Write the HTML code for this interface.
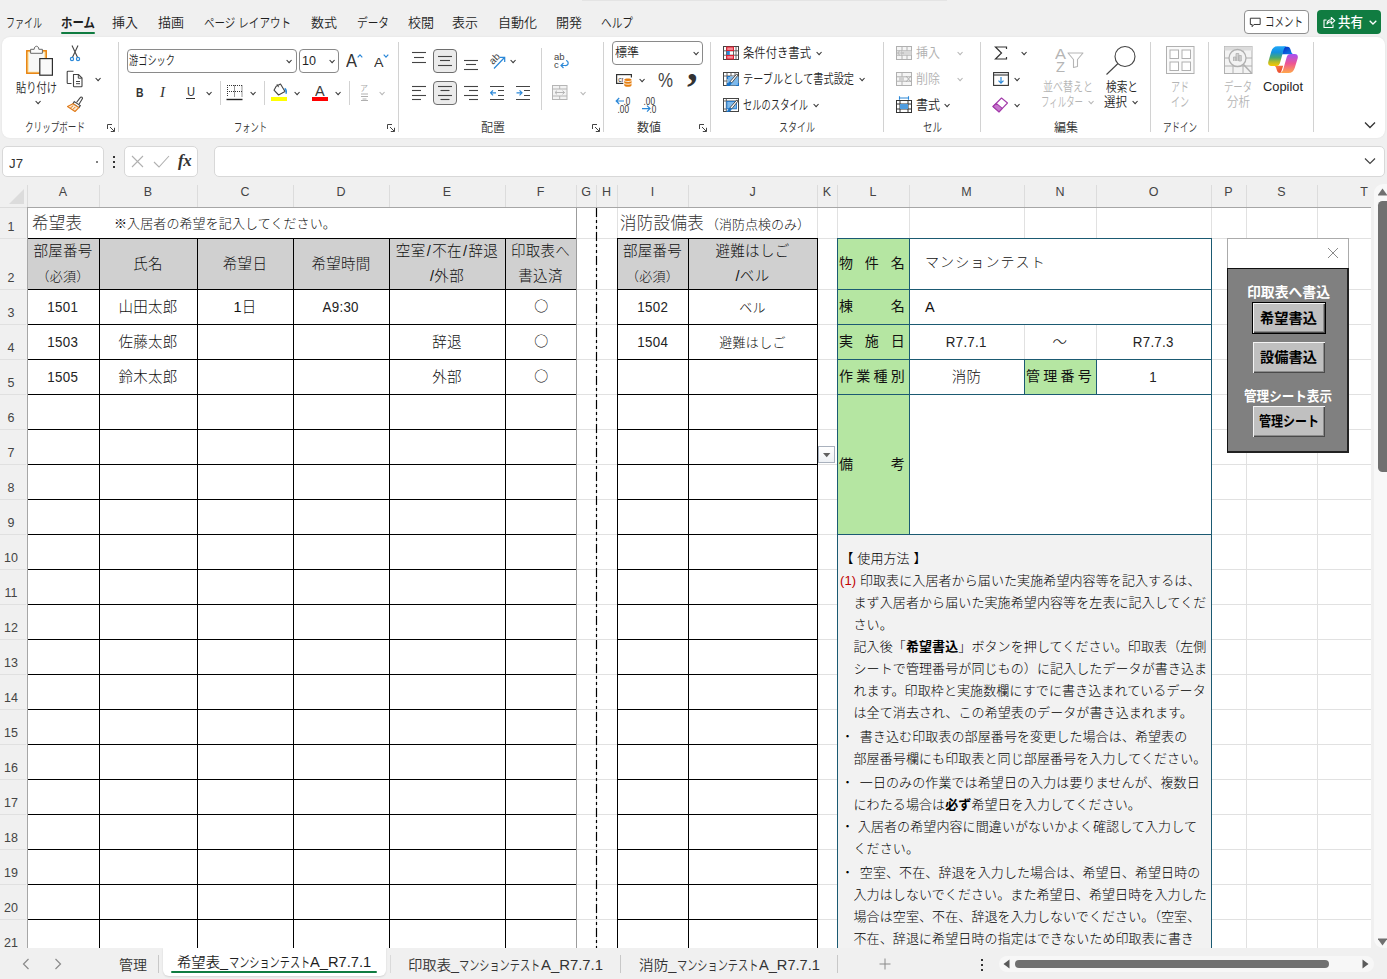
<!DOCTYPE html><html lang="ja"><head><meta charset="utf-8"><title>Excel</title><style>
*{box-sizing:border-box;margin:0;padding:0}
html,body{width:1387px;height:979px;overflow:hidden;background:#f0f0f0}
body{font-family:"Liberation Sans","Noto Sans CJK JP",sans-serif;color:#222;position:relative}
.abs{position:absolute}
.ui{font-family:"Liberation Sans","Noto Sans CJK JP",sans-serif;font-size:13px;color:#262626;white-space:nowrap;position:absolute;transform-origin:0 50%;line-height:16px}
.cell{position:absolute;font-family:"Liberation Sans","Noto Sans CJK JP",sans-serif;font-weight:300;color:#111;white-space:nowrap;display:flex;align-items:center;justify-content:center;text-align:center;font-size:14.5px;line-height:27px;letter-spacing:.3px;padding-top:1px}
.cell i{font-style:normal;padding:0 1.2px}
.num{display:inline-block;transform:scaleX(.92);color:#222}
.hl{position:absolute;background:#000;height:1px}
.vl{position:absolute;background:#000;width:1px}
.gh{position:absolute;background:#e1e1e1;height:1px}
.gv{position:absolute;background:#e1e1e1;width:1px}
.colh{position:absolute;top:181px;height:23px;font-size:12.5px;color:#444;text-align:center;line-height:23px;font-family:"Liberation Sans",sans-serif}
.rowh{position:absolute;left:0;width:27px;font-size:12.5px;color:#444;text-align:center;font-family:"Liberation Sans",sans-serif;line-height:16px;padding-right:5px}
</style><style>
.ins{font-family:"Liberation Sans","Noto Sans CJK JP",sans-serif;font-weight:300;font-size:13px;line-height:22px;color:#000;white-space:nowrap;letter-spacing:.1px}
.ins b{font-weight:700}
.fl{font-family:"Liberation Sans","Noto Sans CJK JP",sans-serif;font-weight:700;font-size:13px;line-height:18px;color:#fff;text-align:center;white-space:nowrap;letter-spacing:-.5px}
.fb{font-family:"Liberation Sans","Noto Sans CJK JP",sans-serif;font-weight:700;font-size:13px;color:#000;text-align:center;white-space:nowrap;background:#c0c0c0;display:flex;align-items:center;justify-content:center;letter-spacing:-.5px;padding-bottom:3px}
</style></head><body>
<span class="ui" style="left:6px;top:14.0px;font-size:13px;line-height:18px;color:#1f1f1f;font-weight:350;transform:scaleX(0.6921);">ファイル</span>
<span class="ui" style="left:61px;top:14.0px;font-size:13px;line-height:18px;color:#1f1f1f;font-weight:700;transform:scaleX(0.8803);">ホーム</span>
<span class="ui" style="left:112px;top:14.0px;font-size:13px;line-height:18px;color:#1f1f1f;font-weight:350;transform:scaleX(0.9994);">挿入</span>
<span class="ui" style="left:158px;top:14.0px;font-size:13px;line-height:18px;color:#1f1f1f;font-weight:350;transform:scaleX(0.9994);">描画</span>
<span class="ui" style="left:204px;top:14.0px;font-size:13px;line-height:18px;color:#1f1f1f;font-weight:350;transform:scaleX(0.8104);">ページ レイアウト</span>
<span class="ui" style="left:311px;top:14.0px;font-size:13px;line-height:18px;color:#1f1f1f;font-weight:350;transform:scaleX(0.9994);">数式</span>
<span class="ui" style="left:357px;top:14.0px;font-size:13px;line-height:18px;color:#1f1f1f;font-weight:350;transform:scaleX(0.8202);">データ</span>
<span class="ui" style="left:408px;top:14.0px;font-size:13px;line-height:18px;color:#1f1f1f;font-weight:350;transform:scaleX(0.9994);">校閲</span>
<span class="ui" style="left:452px;top:14.0px;font-size:13px;line-height:18px;color:#1f1f1f;font-weight:350;transform:scaleX(0.9994);">表示</span>
<span class="ui" style="left:498px;top:14.0px;font-size:13px;line-height:18px;color:#1f1f1f;font-weight:350;transform:scaleX(0.9996);">自動化</span>
<span class="ui" style="left:556px;top:14.0px;font-size:13px;line-height:18px;color:#1f1f1f;font-weight:350;transform:scaleX(0.9994);">開発</span>
<span class="ui" style="left:601px;top:14.0px;font-size:13px;line-height:18px;color:#1f1f1f;font-weight:350;transform:scaleX(0.8202);">ヘルプ</span>
<div class="abs" style="left:61px;top:32px;width:34px;height:2px;background:#107c41;border-radius:1px"></div>
<div class="abs" style="left:1244px;top:10px;width:65px;height:24px;background:#fff;border:1px solid #8f8f8f;border-radius:4px"></div>
<svg class="abs" style="left:1249px;top:16px" width="12.5" height="12.5" viewBox="0 0 14 14"><path d="M1.5 2.5 H12.5 V9.5 H5.5 L3.5 12 V9.5 H1.5 Z" fill="none" stroke="#333" stroke-width="1.1" stroke-linejoin="round"/></svg>
<span class="ui" style="left:1265px;top:13.0px;font-size:13px;line-height:18px;color:#1f1f1f;font-weight:350;transform:scaleX(0.7305);">コメント</span>
<div class="abs" style="left:1317px;top:10px;width:64px;height:24px;background:#107c41;border-radius:4px"></div>
<svg class="abs" style="left:1322px;top:15px" width="14" height="14" viewBox="0 0 14 14"><path d="M4.5 5 H2 V12.5 H11 V9.5 M5 9 C5 6 7 4.8 9.3 4.8 V2.5 L12.8 5.7 L9.3 8.8 V6.6 C7.5 6.6 6 7.2 5 9 Z" fill="none" stroke="#fff" stroke-width="1.1" stroke-linejoin="round"/></svg>
<span class="ui" style="left:1338px;top:12.5px;font-size:13.5px;line-height:19px;color:#fff;font-weight:500;transform:scaleX(0.9259);">共有</span>
<svg class="abs" style="left:1369px;top:20px" width="8" height="5" viewBox="0 0 8 5"><path d="M.7 .7 L4 4 L7.3 .7" fill="none" stroke="#fff" stroke-width="1.3"/></svg>
<div class="abs" style="left:582px;top:0;width:365px;height:1px;background:#e4e4e4"></div>
<div class="abs" style="left:2px;top:37px;width:1383px;height:101px;background:#fff;border-radius:8px;box-shadow:0 0 2px rgba(0,0,0,.08)"></div>
<div class="abs" style="left:118px;top:42px;width:1px;height:90px;background:#d2d2d2"></div>
<div class="abs" style="left:398px;top:42px;width:1px;height:90px;background:#d2d2d2"></div>
<div class="abs" style="left:603px;top:42px;width:1px;height:90px;background:#d2d2d2"></div>
<div class="abs" style="left:710px;top:42px;width:1px;height:90px;background:#d2d2d2"></div>
<div class="abs" style="left:883px;top:42px;width:1px;height:90px;background:#d2d2d2"></div>
<div class="abs" style="left:980px;top:42px;width:1px;height:90px;background:#d2d2d2"></div>
<div class="abs" style="left:1150px;top:42px;width:1px;height:90px;background:#d2d2d2"></div>
<div class="abs" style="left:1208px;top:42px;width:1px;height:90px;background:#d2d2d2"></div>
<div class="abs" style="left:1313px;top:42px;width:1px;height:90px;background:#d2d2d2"></div>
<svg class="abs" style="left:25px;top:44px" width="30" height="34" viewBox="0 0 30 34"><rect x="1.8" y="6.8" width="19.4" height="22.4" fill="#fbe7b4" stroke="#e8820c" stroke-width="1.5"/>
<rect x="4" y="9" width="15" height="18.5" fill="#f7f7f7"/>
<path d="M5.6 9.300 V5.300 H9.200 C9.200 1.200 13.800 1.200 13.800 5.300 H17.400 V9.300 Z" fill="#fafafa" stroke="#6a6a6a" stroke-width="1"/>
<rect x="14.8" y="14.600" width="12.600" height="16.600" fill="#fafafa" stroke="#2e2e2e" stroke-width="1.2"/></svg>
<span class="ui" style="left:16px;top:79.0px;font-size:13px;line-height:18px;color:#262626;font-weight:350;transform:scaleX(0.7882);">貼り付け</span>
<svg class="abs" style="left:34.9px;top:99.8px" width="6.2" height="5" viewBox="0 0 7 5"><path d="M.7 .8 L3.5 3.8 L6.3 .8" fill="none" stroke="#333" stroke-width="1.2"/></svg>
<svg class="abs" style="left:67px;top:44px" width="16" height="18" viewBox="0 0 16 18"><path d="M5 1.500 L10.600 13.400 M11 1.500 L5.400 13.400" stroke="#444" stroke-width="1.1" fill="none"/><circle cx="5" cy="15" r="1.600" fill="none" stroke="#2b88d8" stroke-width="1.2"/><circle cx="11" cy="15" r="1.600" fill="none" stroke="#2b88d8" stroke-width="1.2"/></svg>
<svg class="abs" style="left:66px;top:70px" width="18" height="18" viewBox="0 0 18 18"><path d="M5.5 13.5 H2 a.8 .8 0 0 1 -.8 -.8 V2 a.8 .8 0 0 1 .8 -.8 H7.5" fill="none" stroke="#444" stroke-width="1.1"/><path d="M7.5 4.5 H12.5 L16 8 V16 a.7 .7 0 0 1 -.7 .7 H8.2 a.7 .7 0 0 1 -.7 -.7 Z" fill="#fff" stroke="#444" stroke-width="1.1"/><path d="M12.3 4.7 V8.2 H15.8 M10 11.5 H14 M10 13.7 H14" fill="none" stroke="#444" stroke-width="1"/></svg>
<svg class="abs" style="left:94.9px;top:76.8px" width="6.2" height="5" viewBox="0 0 7 5"><path d="M.7 .8 L3.5 3.8 L6.3 .8" fill="none" stroke="#333" stroke-width="1.2"/></svg>
<svg class="abs" style="left:66px;top:96px" width="18" height="17" viewBox="0 0 18 17"><path d="M10.5 6.5 L14.2 1.6 a1.2 1.2 0 0 1 2 1.4 L13 8.2" fill="#fff" stroke="#444" stroke-width="1.1"/><path d="M8.3 5.6 L14.3 9.6 L13 11.6 L7 7.6 Z" fill="#fff" stroke="#444" stroke-width="1.1"/><path d="M7 7.8 L1.5 10.5 L9 15.5 L12.8 11.6 Z" fill="#fce9d2" stroke="#e07b1a" stroke-width="1.1" stroke-linejoin="round"/><path d="M4.2 12.3 L7.2 9.6 M6.5 13.8 L9.3 11" stroke="#e07b1a" stroke-width="1" fill="none"/></svg>
<span class="ui" style="left:25px;top:119.0px;font-size:12.5px;line-height:18px;color:#333;font-weight:350;transform:scaleX(0.6856);">クリップボード</span>
<svg class="abs" style="left:107px;top:124px" width="8" height="8" viewBox="0 0 8 8"><path d="M.5 5 V.5 H5 M3 3 L7.3 7.3 M7.5 3.8 V7.5 H3.8" fill="none" stroke="#444" stroke-width="1"/></svg>
<div class="abs" style="left:127px;top:49px;width:170px;height:24px;background:#fff;border:1px solid #8a8a8a;border-radius:4px"></div>
<span class="ui" style="left:129px;top:52.0px;font-size:12.5px;line-height:18px;color:#1f1f1f;font-weight:350;transform:scaleX(0.7358);">游ゴシック</span>
<svg class="abs" style="left:285.9px;top:58.8px" width="6.2" height="5" viewBox="0 0 7 5"><path d="M.7 .8 L3.5 3.8 L6.3 .8" fill="none" stroke="#333" stroke-width="1.2"/></svg>
<div class="abs" style="left:299px;top:49px;width:40px;height:24px;background:#fff;border:1px solid #8a8a8a;border-radius:4px"></div>
<span class="ui" style="left:302px;top:52.0px;font-size:13px;line-height:18px;color:#1f1f1f;font-weight:350;transform:scaleX(0.9676);">10</span>
<svg class="abs" style="left:328.9px;top:58.8px" width="6.2" height="5" viewBox="0 0 7 5"><path d="M.7 .8 L3.5 3.8 L6.3 .8" fill="none" stroke="#333" stroke-width="1.2"/></svg>
<span class="ui" style="left:346px;top:48.5px;font-size:18px;line-height:25px;color:#333;font-weight:350;transform:scaleX(0.9155);">A</span>
<svg class="abs" style="left:356.5px;top:53.5px" width="6" height="4" viewBox="0 0 6 4"><path d="M.7 3.300 L3 .900 L5.300 3.300" fill="none" stroke="#2b88d8" stroke-width="1.2"/></svg>
<span class="ui" style="left:374px;top:53.0px;font-size:13.5px;line-height:19px;color:#333;font-weight:350;transform:scaleX(1.0537);">A</span>
<svg class="abs" style="left:382.5px;top:54px" width="6" height="4" viewBox="0 0 6 4"><path d="M.7 .700 L3 3.100 L5.300 .700" fill="none" stroke="#2b88d8" stroke-width="1.2"/></svg>
<span class="ui" style="left:135.5px;top:82.5px;font-size:13.5px;line-height:19px;color:#333;font-weight:700;transform:scaleX(0.7692);">B</span>
<span class="ui" style="left:160px;top:83px;font-size:15px;font-style:italic;font-family:'Liberation Serif',serif;color:#333;line-height:18px">I</span>
<span class="ui" style="left:186.5px;top:82.5px;font-size:13px;line-height:18px;color:#333;font-weight:350;transform:scaleX(0.8519);">U</span>
<div class="abs" style="left:186px;top:98px;width:9px;height:1px;background:#333"></div>
<svg class="abs" style="left:205.9px;top:90.8px" width="6.2" height="5" viewBox="0 0 7 5"><path d="M.7 .8 L3.5 3.8 L6.3 .8" fill="none" stroke="#333" stroke-width="1.2"/></svg>
<div class="abs" style="left:220px;top:81px;width:1px;height:24px;background:#d2d2d2"></div>
<svg class="abs" style="left:226px;top:84px" width="17" height="17" viewBox="0 0 17 17"><path d="M1 1.5 H16 M1.5 1 V13 M16 1.5 V13 M8.5 1.5 V13 M1 7.5 H16" stroke="#333" stroke-width="1" stroke-dasharray="1 1" fill="none"/><path d="M.5 15.5 H16.5" stroke="#222" stroke-width="1.4"/></svg>
<svg class="abs" style="left:249.9px;top:90.8px" width="6.2" height="5" viewBox="0 0 7 5"><path d="M.7 .8 L3.5 3.8 L6.3 .8" fill="none" stroke="#333" stroke-width="1.2"/></svg>
<div class="abs" style="left:264px;top:81px;width:1px;height:24px;background:#d2d2d2"></div>
<svg class="abs" style="left:270px;top:83px" width="18" height="15" viewBox="0 0 18 15"><path d="M6.2 3.2 L10.5 1 L15 8.5 L8.6 12 L4 7.2 Z" fill="#fff" stroke="#444" stroke-width="1.1" stroke-linejoin="round"/><path d="M7 1.2 L8.6 4.2" stroke="#444" stroke-width="1" fill="none"/><path d="M14.6 5.5 C16.2 6.5 16.6 8.5 16 10.8" stroke="#2b88d8" stroke-width="1.5" fill="none"/></svg>
<div class="abs" style="left:271px;top:97px;width:16px;height:4px;background:#ffff00"></div>
<svg class="abs" style="left:293.9px;top:90.8px" width="6.2" height="5" viewBox="0 0 7 5"><path d="M.7 .8 L3.5 3.8 L6.3 .8" fill="none" stroke="#333" stroke-width="1.2"/></svg>
<span class="ui" style="left:315.3px;top:79.5px;font-size:15px;line-height:21px;color:#3a3a3a;font-weight:350;transform:scaleX(0.9685);">A</span>
<div class="abs" style="left:312px;top:97px;width:16px;height:4px;background:#ff0000"></div>
<svg class="abs" style="left:334.9px;top:90.8px" width="6.2" height="5" viewBox="0 0 7 5"><path d="M.7 .8 L3.5 3.8 L6.3 .8" fill="none" stroke="#333" stroke-width="1.2"/></svg>
<div class="abs" style="left:349px;top:81px;width:1px;height:24px;background:#d2d2d2"></div>
<span class="ui" style="left:360px;top:82.5px;font-size:8px;line-height:11px;color:#a8a8a8;font-weight:350;transform:scaleX(1.0000);">ア</span>
<svg class="abs" style="left:360px;top:93px" width="9" height="8" viewBox="0 0 9 8"><path d="M1 1 H8 M1 3.5 H8 M2.5 6 H6.5 M1 7.5 H8" stroke="#b0b0b0" stroke-width="1" fill="none"/></svg>
<svg class="abs" style="left:378.9px;top:90.8px" width="6.2" height="5" viewBox="0 0 7 5"><path d="M.7 .8 L3.5 3.8 L6.3 .8" fill="none" stroke="#b5b5b5" stroke-width="1.2"/></svg>
<span class="ui" style="left:234px;top:119.0px;font-size:12.5px;line-height:18px;color:#333;font-weight:350;transform:scaleX(0.6598);">フォント</span>
<svg class="abs" style="left:387px;top:124px" width="8" height="8" viewBox="0 0 8 8"><path d="M.5 5 V.5 H5 M3 3 L7.3 7.3 M7.5 3.8 V7.5 H3.8" fill="none" stroke="#444" stroke-width="1"/></svg>
<svg class="abs" style="left:412px;top:50px" width="14" height="16" viewBox="0 0 14 16"><path d="M0.0 2.5 H14.0" stroke="#444" stroke-width="1.1"/><path d="M2.0 7.5 H12.0" stroke="#444" stroke-width="1.1"/><path d="M0.0 12.5 H14.0" stroke="#444" stroke-width="1.1"/></svg>
<div class="abs" style="left:433px;top:49px;width:24px;height:24px;background:#ebebeb;border:1px solid #6e6e6e;border-radius:4px"></div>
<svg class="abs" style="left:438px;top:53px" width="14" height="16" viewBox="0 0 14 16"><path d="M0.0 3.5 H14.0" stroke="#444" stroke-width="1.1"/><path d="M2.0 7.5 H12.0" stroke="#444" stroke-width="1.1"/><path d="M0.0 12.5 H14.0" stroke="#444" stroke-width="1.1"/></svg>
<svg class="abs" style="left:464px;top:57px" width="14" height="16" viewBox="0 0 14 16"><path d="M0.0 3.5 H14.0" stroke="#444" stroke-width="1.1"/><path d="M2.0 7.5 H12.0" stroke="#444" stroke-width="1.1"/><path d="M0.0 12.5 H14.0" stroke="#444" stroke-width="1.1"/></svg>
<svg class="abs" style="left:488px;top:50px" width="20" height="20" viewBox="0 0 20 20"><text x="2" y="12" font-size="10" font-family="Liberation Sans, sans-serif" fill="#444" transform="rotate(-45 7 10)">ab</text><path d="M6 18.5 L16.5 7.5 M12 7.3 H16.7 V12" stroke="#2b88d8" stroke-width="1.2" fill="none"/></svg>
<svg class="abs" style="left:509.9px;top:58.8px" width="6.2" height="5" viewBox="0 0 7 5"><path d="M.7 .8 L3.5 3.8 L6.3 .8" fill="none" stroke="#333" stroke-width="1.2"/></svg>
<div class="abs" style="left:541px;top:48px;width:1px;height:62px;background:#d2d2d2"></div>
<svg class="abs" style="left:553px;top:52px" width="17" height="18" viewBox="0 0 17 18"><text x="1" y="8" font-size="9.5" font-family="Liberation Sans, sans-serif" fill="#444">ab</text><text x="1" y="16" font-size="9.5" font-family="Liberation Sans, sans-serif" fill="#444">c</text><path d="M13 8.5 C16 9 16 14 12 13.5 H8 M10.5 11 L8 13.5 L10.5 16" stroke="#2b88d8" stroke-width="1.2" fill="none"/></svg>
<svg class="abs" style="left:412px;top:84px" width="14" height="18" viewBox="0 0 14 18"><path d="M0 2.5 H14" stroke="#444" stroke-width="1.1"/><path d="M0 6.5 H9" stroke="#444" stroke-width="1.1"/><path d="M0 11.5 H14" stroke="#444" stroke-width="1.1"/><path d="M0 15.5 H9" stroke="#444" stroke-width="1.1"/></svg>
<div class="abs" style="left:433px;top:81px;width:24px;height:24px;background:#ebebeb;border:1px solid #6e6e6e;border-radius:4px"></div>
<svg class="abs" style="left:438px;top:84px" width="14" height="18" viewBox="0 0 14 18"><path d="M0.0 2.5 H14.0" stroke="#444" stroke-width="1.1"/><path d="M2.5 6.5 H11.5" stroke="#444" stroke-width="1.1"/><path d="M0.0 11.5 H14.0" stroke="#444" stroke-width="1.1"/><path d="M2.5 15.5 H11.5" stroke="#444" stroke-width="1.1"/></svg>
<svg class="abs" style="left:464px;top:84px" width="14" height="18" viewBox="0 0 14 18"><path d="M0 2.5 H14" stroke="#444" stroke-width="1.1"/><path d="M5 6.5 H14" stroke="#444" stroke-width="1.1"/><path d="M0 11.5 H14" stroke="#444" stroke-width="1.1"/><path d="M5 15.5 H14" stroke="#444" stroke-width="1.1"/></svg>
<svg class="abs" style="left:490px;top:84px" width="15" height="18" viewBox="0 0 15 18"><path d="M0 2.5 H14 M8 6.5 H14 M8 11.5 H14 M0 15.5 H14" stroke="#444" stroke-width="1.1"/><path d="M6 8.8 H.8 M3 6.3 L.6 8.8 L3 11.3" stroke="#2b88d8" stroke-width="1.2" fill="none"/></svg>
<svg class="abs" style="left:516px;top:84px" width="15" height="18" viewBox="0 0 15 18"><path d="M0 2.5 H14 M8 6.5 H14 M8 11.5 H14 M0 15.5 H14" stroke="#444" stroke-width="1.1"/><path d="M.5 8.8 H5.8 M3.5 6.3 L6 8.8 L3.5 11.3" stroke="#2b88d8" stroke-width="1.2" fill="none"/></svg>
<svg class="abs" style="left:552px;top:85px" width="16" height="15" viewBox="0 0 16 15"><rect x=".5" y=".5" width="14.5" height="14" fill="#f3f3f3" stroke="#b5b5b5"/><path d="M.5 4 H15 M.5 11 H15 M7.7 .5 V4 M7.7 11 V14.5" stroke="#b5b5b5" fill="none"/><path d="M3 7.5 H12.5 M5 5.7 L3 7.5 L5 9.3 M10.5 5.7 L12.5 7.5 L10.5 9.3" stroke="#b5b5b5" fill="none"/></svg>
<svg class="abs" style="left:579.9px;top:90.8px" width="6.2" height="5" viewBox="0 0 7 5"><path d="M.7 .8 L3.5 3.8 L6.3 .8" fill="none" stroke="#b5b5b5" stroke-width="1.2"/></svg>
<span class="ui" style="left:481px;top:119.0px;font-size:12.5px;line-height:18px;color:#333;font-weight:350;transform:scaleX(0.9594);">配置</span>
<svg class="abs" style="left:592px;top:124px" width="8" height="8" viewBox="0 0 8 8"><path d="M.5 5 V.5 H5 M3 3 L7.3 7.3 M7.5 3.8 V7.5 H3.8" fill="none" stroke="#444" stroke-width="1"/></svg>
<div class="abs" style="left:612px;top:41px;width:91px;height:24px;background:#fff;border:1px solid #8a8a8a;border-radius:4px"></div>
<span class="ui" style="left:615px;top:44.0px;font-size:12.5px;line-height:18px;color:#1f1f1f;font-weight:350;transform:scaleX(0.9594);">標準</span>
<svg class="abs" style="left:692.9px;top:50.8px" width="6.2" height="5" viewBox="0 0 7 5"><path d="M.7 .8 L3.5 3.8 L6.3 .8" fill="none" stroke="#333" stroke-width="1.2"/></svg>
<svg class="abs" style="left:616px;top:73px" width="18" height="15" viewBox="0 0 18 15"><rect x=".6" y="1.600" width="14.800" height="8.800" fill="#fff" stroke="#333" stroke-width="1.200"/><text x="2.300" y="8.600" font-size="7" font-family="Liberation Sans, sans-serif" fill="#333">cr</text><rect x="7.300" y="4.500" width="9" height="10" fill="#fff"/><path d="M8.300 6.800 C8.300 4.900 15.500 4.900 15.500 6.800 V12.300 C15.500 14.300 8.300 14.300 8.300 12.300 Z" fill="#e67e0f"/><path d="M8.300 7.300 C8.300 8.900 15.500 8.900 15.500 7.300 M8.300 10 C8.300 11.600 15.500 11.600 15.500 10" fill="none" stroke="#fff" stroke-width=".9"/></svg>
<svg class="abs" style="left:638.9px;top:77.8px" width="6.2" height="5" viewBox="0 0 7 5"><path d="M.7 .8 L3.5 3.8 L6.3 .8" fill="none" stroke="#333" stroke-width="1.2"/></svg>
<span class="ui" style="left:657.5px;top:65.5px;font-size:20px;line-height:28px;color:#444;font-weight:350;transform:scaleX(0.8428);">%</span>
<span class="ui" style="left:687px;top:42px;font-size:43px;font-family:'Liberation Serif',serif;color:#333;line-height:48px;font-weight:700">,</span>
<svg class="abs" style="left:615px;top:96px" width="18" height="17" viewBox="0 0 18 17"><path d="M9 5 H1.200 M4.200 2 L1.200 5 L4.200 8" stroke="#2b88d8" stroke-width="1.2" fill="none"/><text x="0" y="0" font-size="10" font-family="Liberation Sans, sans-serif" fill="#333" transform="translate(8.500 8.500) scale(.82 1)">.0</text><text x="0" y="0" font-size="10" font-family="Liberation Sans, sans-serif" fill="#333" transform="translate(2.600 16.800) scale(.82 1)">.00</text></svg>
<svg class="abs" style="left:641px;top:96px" width="18" height="17" viewBox="0 0 18 17"><text x="0" y="0" font-size="10" font-family="Liberation Sans, sans-serif" fill="#333" transform="translate(2.600 8.500) scale(.82 1)">.00</text><path d="M1 12.600 H9 M6 9.600 L9 12.600 L6 15.600" stroke="#2b88d8" stroke-width="1.2" fill="none"/><text x="0" y="0" font-size="10" font-family="Liberation Sans, sans-serif" fill="#333" transform="translate(8.500 16.800) scale(.82 1)">.0</text></svg>
<span class="ui" style="left:637px;top:119.0px;font-size:12.5px;line-height:18px;color:#333;font-weight:350;transform:scaleX(0.9594);">数値</span>
<svg class="abs" style="left:699px;top:124px" width="8" height="8" viewBox="0 0 8 8"><path d="M.5 5 V.5 H5 M3 3 L7.3 7.3 M7.5 3.8 V7.5 H3.8" fill="none" stroke="#444" stroke-width="1"/></svg>
<svg class="abs" style="left:723px;top:46px" width="16" height="14" viewBox="0 0 16 14"><rect x=".5" y=".5" width="15" height="13" fill="#fff" stroke="#444"/><path d="M.5 4.800 H15.500 M.5 9.200 H15.500 M3.500 .5 V13.500 M10.500 .5 V13.500 M13 .5 V13.500" stroke="#555" fill="none" stroke-width=".9"/><rect x="3.800" y="1" width="6.600" height="3.600" fill="#f48a95" stroke="#e81224" stroke-width=".9"/><rect x="3.800" y="5" width="3" height="4" fill="#2b88d8"/><rect x="3.800" y="9.400" width="6.600" height="3.600" fill="#f48a95" stroke="#e81224" stroke-width=".9"/></svg>
<span class="ui" style="left:743px;top:44.0px;font-size:13px;line-height:18px;color:#262626;font-weight:350;transform:scaleX(0.8716);">条件付き書式</span>
<svg class="abs" style="left:815.9px;top:51.3px" width="6.2" height="5" viewBox="0 0 7 5"><path d="M.7 .8 L3.5 3.8 L6.3 .8" fill="none" stroke="#333" stroke-width="1.2"/></svg>
<svg class="abs" style="left:723px;top:72px" width="16" height="15" viewBox="0 0 16 15"><rect x=".5" y=".5" width="15" height="13" fill="#fff" stroke="#444"/><path d="M.5 4 H15.500 M4 .5 V13.500 M8 .5 V4 M12 .5 V4 M.5 9 H4" stroke="#555" fill="none" stroke-width=".9"/><rect x="4.500" y="4.500" width="11" height="9" fill="#7db9ec"/><path d="M4.500 13.500 V11 M4.500 13.500 H7 M15.500 13.500 V11 M15.500 13.500 H13 M4.500 4.500 H7 M4.500 4.500 V7" stroke="#1a73c8" stroke-width="1.200" fill="none"/><path d="M15.200 2.800 L8.800 10.800 L7 9.600 L13.800 2 Z" fill="#fff" stroke="#444" stroke-width=".9"/><path d="M7 9.700 C5 10 5.400 12.500 3 13.700 C5.700 14.800 8.500 13.200 8.700 10.800 Z" fill="#1a73c8"/></svg>
<span class="ui" style="left:743px;top:70.0px;font-size:13px;line-height:18px;color:#262626;font-weight:350;transform:scaleX(0.7826);">テーブルとして書式設定</span>
<svg class="abs" style="left:858.9px;top:77.3px" width="6.2" height="5" viewBox="0 0 7 5"><path d="M.7 .8 L3.5 3.8 L6.3 .8" fill="none" stroke="#333" stroke-width="1.2"/></svg>
<svg class="abs" style="left:723px;top:98px" width="16" height="15" viewBox="0 0 16 15"><rect x=".5" y=".5" width="15" height="13" fill="#fff" stroke="#444"/><path d="M.5 3 H15.500 M3.300 .5 V13.500 M.5 11 H3.300" stroke="#555" fill="none" stroke-width=".9"/><rect x="3.800" y="3.400" width="9.600" height="7.400" fill="#7db9ec" stroke="#1a73c8" stroke-width=".9"/><path d="M15.200 2.800 L8.800 10.800 L7 9.600 L13.800 2 Z" fill="#fff" stroke="#444" stroke-width=".9"/><path d="M7 9.700 C5 10 5.400 12.500 3 13.700 C5.700 14.800 8.500 13.200 8.700 10.800 Z" fill="#1a73c8"/></svg>
<span class="ui" style="left:743px;top:96.0px;font-size:13px;line-height:18px;color:#262626;font-weight:350;transform:scaleX(0.7142);">セルのスタイル</span>
<svg class="abs" style="left:812.9px;top:103.3px" width="6.2" height="5" viewBox="0 0 7 5"><path d="M.7 .8 L3.5 3.8 L6.3 .8" fill="none" stroke="#333" stroke-width="1.2"/></svg>
<span class="ui" style="left:779px;top:119.0px;font-size:12.5px;line-height:18px;color:#333;font-weight:350;transform:scaleX(0.7198);">スタイル</span>
<svg class="abs" style="left:896px;top:46px" width="17" height="14" viewBox="0 0 17 14"><rect x=".5" y=".5" width="15" height="13" fill="#f5f5f5" stroke="#b0b0b0"/><path d="M.5 4.8 H15.5 M.5 9.2 H15.5 M6 .5 V13.5 M11 .5 V13.5" stroke="#b0b0b0" fill="none"/><rect x="6" y="4.8" width="9.5" height="4.4" fill="#d8d8d8"/><path d="M8 7 H1.5 M3.8 4.8 L1.5 7 L3.8 9.2" stroke="#b0b0b0" fill="none"/></svg>
<span class="ui" style="left:916px;top:44.0px;font-size:13px;line-height:18px;color:#b0b0b0;font-weight:350;transform:scaleX(0.9225);">挿入</span>
<svg class="abs" style="left:956.9px;top:51.3px" width="6.2" height="5" viewBox="0 0 7 5"><path d="M.7 .8 L3.5 3.8 L6.3 .8" fill="none" stroke="#b5b5b5" stroke-width="1.2"/></svg>
<svg class="abs" style="left:896px;top:72px" width="17" height="14" viewBox="0 0 17 14"><rect x=".5" y=".5" width="15" height="13" fill="#f5f5f5" stroke="#b0b0b0"/><path d="M.5 4.8 H15.5 M.5 9.2 H15.5 M6 .5 V13.5" stroke="#b0b0b0" fill="none"/><rect x="3" y="4.8" width="5" height="4.4" fill="#d0d0d0"/><path d="M10 4 L15 10 M15 4 L10 10" stroke="#b0b0b0" fill="none"/></svg>
<span class="ui" style="left:916px;top:70.0px;font-size:13px;line-height:18px;color:#b0b0b0;font-weight:350;transform:scaleX(0.9225);">削除</span>
<svg class="abs" style="left:956.9px;top:77.3px" width="6.2" height="5" viewBox="0 0 7 5"><path d="M.7 .8 L3.5 3.8 L6.3 .8" fill="none" stroke="#b5b5b5" stroke-width="1.2"/></svg>
<svg class="abs" style="left:896px;top:96px" width="17" height="17" viewBox="0 0 17 17"><path d="M3.5 2 H12.5 M3.5 .3 V3.7 M12.5 .3 V3.7" stroke="#2b88d8" stroke-width="1.1" fill="none"/><rect x=".5" y="4.5" width="15" height="12" fill="#fff" stroke="#333"/><path d="M.5 8 H15.5 M.5 13 H15.5 M4 4.5 V16.5 M12 4.5 V16.5" stroke="#333" fill="none"/><rect x="4" y="8" width="8" height="5" fill="#4f9de0"/></svg>
<span class="ui" style="left:916px;top:96.0px;font-size:13px;line-height:18px;color:#262626;font-weight:350;transform:scaleX(0.9225);">書式</span>
<svg class="abs" style="left:943.9px;top:103.3px" width="6.2" height="5" viewBox="0 0 7 5"><path d="M.7 .8 L3.5 3.8 L6.3 .8" fill="none" stroke="#333" stroke-width="1.2"/></svg>
<span class="ui" style="left:923px;top:119.0px;font-size:12.5px;line-height:18px;color:#333;font-weight:350;transform:scaleX(0.7595);">セル</span>
<svg class="abs" style="left:994px;top:46px" width="14" height="14" viewBox="0 0 14 14"><path d="M12.5 3 V1 H1.5 L7.5 7 L1.5 13 H12.5 V11" fill="none" stroke="#333" stroke-width="1.2"/></svg>
<svg class="abs" style="left:1020.9px;top:51.3px" width="6.2" height="5" viewBox="0 0 7 5"><path d="M.7 .8 L3.5 3.8 L6.3 .8" fill="none" stroke="#333" stroke-width="1.2"/></svg>
<svg class="abs" style="left:993px;top:72px" width="16" height="14" viewBox="0 0 16 14"><rect x=".6" y=".6" width="14.8" height="12.8" fill="#fff" stroke="#333" stroke-width="1.1"/><path d="M.6 3 H15.4" stroke="#333" stroke-width="1.1"/><path d="M8 5 V11 M5.5 8.7 L8 11.2 L10.5 8.7" stroke="#2b88d8" stroke-width="1.2" fill="none"/></svg>
<svg class="abs" style="left:1013.9px;top:77.3px" width="6.2" height="5" viewBox="0 0 7 5"><path d="M.7 .8 L3.5 3.8 L6.3 .8" fill="none" stroke="#333" stroke-width="1.2"/></svg>
<svg class="abs" style="left:992px;top:97px" width="17" height="16" viewBox="0 0 17 16"><path d="M1 9.5 L9.5 1 L15.5 6 L7 14.8 Z" fill="#fff" stroke="#a33cab" stroke-width="1.1" stroke-linejoin="round"/><path d="M1 9.5 L4.3 6.3 L10.3 11.4 L7 14.8 Z" fill="#c776cd" stroke="#a33cab" stroke-width="1.1" stroke-linejoin="round"/></svg>
<svg class="abs" style="left:1013.9px;top:103.3px" width="6.2" height="5" viewBox="0 0 7 5"><path d="M.7 .8 L3.5 3.8 L6.3 .8" fill="none" stroke="#333" stroke-width="1.2"/></svg>
<span class="ui" style="left:1055px;top:42.5px;font-size:15px;line-height:21px;color:#b5b5b5;font-weight:350;transform:scaleX(1.0983);">A</span>
<span class="ui" style="left:1056px;top:55.5px;font-size:15px;line-height:21px;color:#b5b5b5;font-weight:350;transform:scaleX(0.9813);">Z</span>
<svg class="abs" style="left:1067px;top:52px" width="17" height="17" viewBox="0 0 17 17"><path d="M1 1 H16 L10.5 7.5 V14.5 L6.5 15.5 V7.5 Z" fill="none" stroke="#b5b5b5" stroke-width="1.1" stroke-linejoin="round"/></svg>
<span class="ui" style="left:1043px;top:78.0px;font-size:13px;line-height:18px;color:#b5b5b5;font-weight:350;transform:scaleX(0.7690);">並べ替えと</span>
<span class="ui" style="left:1041px;top:93.0px;font-size:13px;line-height:18px;color:#b5b5b5;font-weight:350;transform:scaleX(0.6486);">フィルター</span>
<svg class="abs" style="left:1087.9px;top:99.8px" width="6.2" height="5" viewBox="0 0 7 5"><path d="M.7 .8 L3.5 3.8 L6.3 .8" fill="none" stroke="#b5b5b5" stroke-width="1.2"/></svg>
<svg class="abs" style="left:1105px;top:44px" width="34" height="32" viewBox="0 0 34 32"><circle cx="20" cy="12.5" r="10" fill="none" stroke="#444" stroke-width="1.1"/><path d="M13 19.5 L1.5 30.5" stroke="#444" stroke-width="1.1"/></svg>
<span class="ui" style="left:1106px;top:78.0px;font-size:13px;line-height:18px;color:#262626;font-weight:350;transform:scaleX(0.8202);">検索と</span>
<span class="ui" style="left:1104px;top:93.0px;font-size:13px;line-height:18px;color:#262626;font-weight:350;transform:scaleX(0.8841);">選択</span>
<svg class="abs" style="left:1131.9px;top:99.8px" width="6.2" height="5" viewBox="0 0 7 5"><path d="M.7 .8 L3.5 3.8 L6.3 .8" fill="none" stroke="#333" stroke-width="1.2"/></svg>
<span class="ui" style="left:1054px;top:119.0px;font-size:12.5px;line-height:18px;color:#333;font-weight:350;transform:scaleX(0.9594);">編集</span>
<svg class="abs" style="left:1166px;top:46px" width="29" height="28" viewBox="0 0 29 28"><rect x=".5" y=".5" width="27.5" height="27" fill="#fafafa" stroke="#b0b0b0"/><rect x="4" y="4" width="8.5" height="8.5" fill="#fff" stroke="#b0b0b0"/><rect x="16" y="4" width="8.5" height="8.5" fill="#fff" stroke="#b0b0b0"/><rect x="4" y="16" width="8.5" height="8.5" fill="#fff" stroke="#b0b0b0"/><rect x="16" y="16" width="8.5" height="8.5" fill="#fff" stroke="#b0b0b0"/></svg>
<span class="ui" style="left:1171px;top:78.0px;font-size:13px;line-height:18px;color:#b5b5b5;font-weight:350;transform:scaleX(0.6919);">アド</span>
<span class="ui" style="left:1171px;top:93.0px;font-size:13px;line-height:18px;color:#b5b5b5;font-weight:350;transform:scaleX(0.6919);">イン</span>
<span class="ui" style="left:1163px;top:119.0px;font-size:12.5px;line-height:18px;color:#333;font-weight:350;transform:scaleX(0.6798);">アドイン</span>
<svg class="abs" style="left:1224px;top:46px" width="29" height="28" viewBox="0 0 29 28"><rect x=".5" y=".5" width="27.5" height="27" fill="#f3f3f3" stroke="#b0b0b0"/><rect x=".5" y=".5" width="27.5" height="4" fill="#dcdcdc"/><path d="M.5 12 H28 M.5 20 H28 M9 4.5 V27.5 M19 4.5 V27.5" stroke="#b0b0b0" fill="none"/><circle cx="13.5" cy="12" r="8.5" fill="#f3f3f3" stroke="#b0b0b0" stroke-width="1.3"/><path d="M9.5 15 V11 H12 V15 M12 15 V7.5 H14.8 V15 M14.8 15 V9.5 H17.3 V15 Z" fill="#d0d0d0" stroke="#b0b0b0" stroke-width=".8"/><path d="M19.5 18.5 L27.5 27" stroke="#b0b0b0" stroke-width="1.5"/></svg>
<span class="ui" style="left:1224px;top:78.0px;font-size:13px;line-height:18px;color:#b5b5b5;font-weight:350;transform:scaleX(0.7177);">データ</span>
<span class="ui" style="left:1227px;top:93.0px;font-size:13px;line-height:18px;color:#b5b5b5;font-weight:350;transform:scaleX(0.8841);">分析</span>
<svg class="abs" style="left:1268px;top:46px" width="30" height="28" viewBox="0 0 30 28"><defs><linearGradient id="cg1" x1="0" y1="0" x2="0" y2="1"><stop offset="0" stop-color="#21a8f8"/><stop offset=".3" stop-color="#1290e0"/><stop offset=".58" stop-color="#48a870"/><stop offset=".8" stop-color="#b8bc28"/><stop offset="1" stop-color="#f8c800"/></linearGradient><linearGradient id="cg2" x1="0" y1="0" x2="0" y2="1"><stop offset="0" stop-color="#a552f5"/><stop offset=".5" stop-color="#ee5592"/><stop offset="1" stop-color="#ffa84a"/></linearGradient><linearGradient id="cg3" x1="0" y1="0" x2="1" y2="1"><stop offset="0" stop-color="#0826c0"/><stop offset="1" stop-color="#0a86ee"/></linearGradient><linearGradient id="cg4" x1="0" y1="0" x2="1" y2="1"><stop offset="0" stop-color="#ff8a48"/><stop offset="1" stop-color="#e2382a"/></linearGradient></defs>
<path d="M15.5 .8 H19.5 C21.3 .8 22 2 22.5 3.6 L23.3 6 C23.6 7 24.2 7.8 25.2 8.2 H14 Z" fill="url(#cg3)"/>
<path d="M6 19.8 H15.2 L13 26.2 C12.6 27 11.8 27 11 26.8 C9.8 26.4 9.2 25.4 8.8 24 L8 21.600 C7.700 20.800 7.200 20.100 6 19.800 Z" fill="url(#cg4)"/>
<path d="M9.500 .3 H18.600 C16.600 1 16 2.600 15.400 4.600 L12.200 16.200 C11.600 18.400 10.600 19.900 8.400 19.900 H3.200 C.800 19.900 -.300 18.200 .300 15.800 L3.300 5.400 C4.200 2.300 6.300 .300 9.500 .300 Z" fill="url(#cg1)"/>
<path d="M20.500 27 H12.400 C14.200 26.200 14.800 24.700 15.400 22.700 L18.600 11.600 C19.200 9.500 20.200 8.100 22.400 8.100 H26.800 C29.200 8.100 30.300 9.800 29.700 12.200 L26.700 22 C25.800 25 23.700 27 20.500 27 Z" fill="url(#cg2)"/></svg>
<span class="ui" style="left:1263px;top:78.0px;font-size:13px;line-height:18px;color:#1f1f1f;font-weight:350;transform:scaleX(0.9884);">Copilot</span>
<svg class="abs" style="left:1364px;top:121px" width="12" height="8" viewBox="0 0 12 8"><path d="M1 1.5 L6 6.5 L11 1.500" fill="none" stroke="#333" stroke-width="1.3"/></svg>
<div class="abs" style="left:2px;top:146px;width:102px;height:31px;background:#fff;border:1px solid #d8d8d8;border-radius:5px"></div>
<span class="ui" style="left:9px;top:155.0px;font-size:13px;line-height:18px;color:#333;font-weight:350;transform:scaleX(1.0193);">J7</span>
<div class="abs" style="left:96px;top:161px;width:2px;height:2px;background:#555;border-radius:1px"></div>
<div class="abs" style="left:113px;top:156px;width:2px;height:2px;background:#333"></div>
<div class="abs" style="left:113px;top:161px;width:2px;height:2px;background:#333"></div>
<div class="abs" style="left:113px;top:166px;width:2px;height:2px;background:#333"></div>
<div class="abs" style="left:124px;top:146px;width:74px;height:31px;background:#fff;border:1px solid #d8d8d8;border-radius:5px"></div>
<svg class="abs" style="left:131px;top:155px" width="13" height="13" viewBox="0 0 13 13"><path d="M1 1 L12 12 M12 1 L1 12" stroke="#b0b0b0" stroke-width="1.1"/></svg>
<svg class="abs" style="left:153px;top:155px" width="17" height="13" viewBox="0 0 17 13"><path d="M1 7 L6 12 L16 1" fill="none" stroke="#b0b0b0" stroke-width="1.1"/></svg>
<span class="ui" style="left:178px;top:151px;font-size:17px;font-style:italic;font-weight:700;font-family:'Liberation Serif',serif;color:#333;line-height:20px;letter-spacing:-.5px">fx</span>
<div class="abs" style="left:214px;top:146px;width:1171px;height:31px;background:#fff;border:1px solid #d8d8d8;border-radius:5px"></div>
<svg class="abs" style="left:1364px;top:157px" width="12" height="8" viewBox="0 0 12 8"><path d="M1 1.5 L6 6.5 L11 1.5" fill="none" stroke="#444" stroke-width="1.2"/></svg>
<div class="abs" style="left:0;top:948px;width:1387px;height:31px;background:#f0f0f0"></div>
<svg class="abs" style="left:22px;top:958px" width="8" height="12" viewBox="0 0 8 12"><path d="M6.5 1 L1.5 6 L6.5 11" fill="none" stroke="#8a8a8a" stroke-width="1.2"/></svg>
<svg class="abs" style="left:54px;top:958px" width="8" height="12" viewBox="0 0 8 12"><path d="M1.5 1 L6.5 6 L1.5 11" fill="none" stroke="#8a8a8a" stroke-width="1.2"/></svg>
<span class="ui" style="left:119px;top:955.0px;font-size:14px;line-height:20px;color:#333;font-weight:350;transform:scaleX(1.0000);">管理</span>
<div class="abs" style="left:158px;top:955px;width:1px;height:18px;background:#c8c8c8"></div>
<div class="abs" style="left:163px;top:948px;width:223px;height:28px;background:#fff;border-radius:0 0 6px 6px;box-shadow:0 1px 2px rgba(0,0,0,.12)"></div>
<span class="ui" style="left:177.3px;top:952.0px;font-size:14px;line-height:20px;color:#1f1f1f;font-weight:350;transform:scaleX(1.0242);">希望表_</span>
<span class="ui" style="left:228.5px;top:952.0px;font-size:14px;line-height:20px;color:#1f1f1f;font-weight:350;transform:scaleX(0.7250);">マンションテスト</span>
<span class="ui" style="left:310.2px;top:952.0px;font-size:14px;line-height:20px;color:#1f1f1f;font-weight:350;transform:scaleX(1.0484);">A_R7.7.1</span>
<div class="abs" style="left:171px;top:971px;width:206px;height:2px;background:#107c41;border-radius:1px"></div>
<div class="abs" style="left:390px;top:955px;width:1px;height:18px;background:#dadada"></div>
<span class="ui" style="left:408px;top:955.0px;font-size:14px;line-height:20px;color:#333;font-weight:350;transform:scaleX(1.0242);">印取表_</span>
<span class="ui" style="left:459.2px;top:955.0px;font-size:14px;line-height:20px;color:#333;font-weight:350;transform:scaleX(0.7250);">マンションテスト</span>
<span class="ui" style="left:541px;top:955.0px;font-size:14px;line-height:20px;color:#333;font-weight:350;transform:scaleX(1.0621);">A_R7.7.1</span>
<div class="abs" style="left:620px;top:955px;width:1px;height:18px;background:#c8c8c8"></div>
<span class="ui" style="left:639px;top:955.0px;font-size:14px;line-height:20px;color:#333;font-weight:350;transform:scaleX(1.0476);">消防_</span>
<span class="ui" style="left:676.7px;top:955.0px;font-size:14px;line-height:20px;color:#333;font-weight:350;transform:scaleX(0.7259);">マンションテスト</span>
<span class="ui" style="left:758.5px;top:955.0px;font-size:14px;line-height:20px;color:#333;font-weight:350;transform:scaleX(1.0433);">A_R7.7.1</span>
<div class="abs" style="left:837px;top:955px;width:1px;height:18px;background:#c8c8c8"></div>
<svg class="abs" style="left:879px;top:958px" width="12" height="12" viewBox="0 0 12 12"><path d="M6 .5 V11.5 M.5 6 H11.5" stroke="#8a8a8a" stroke-width="1"/></svg>
<div class="abs" style="left:981px;top:959px;width:2px;height:2px;background:#333"></div>
<div class="abs" style="left:981px;top:964px;width:2px;height:2px;background:#333"></div>
<div class="abs" style="left:981px;top:969px;width:2px;height:2px;background:#333"></div>
<div class="abs" style="left:999px;top:956px;width:375px;height:16px;background:#f7f7f7;border-radius:8px"></div>
<svg class="abs" style="left:1003px;top:959px" width="7" height="10" viewBox="0 0 7 10"><path d="M6.5 .5 V9.5 L.5 5 Z" fill="#5a5a5a"/></svg>
<svg class="abs" style="left:1362px;top:959px" width="7" height="10" viewBox="0 0 7 10"><path d="M.5 .5 V9.5 L6.5 5 Z" fill="#5a5a5a"/></svg>
<div class="abs" style="left:1015px;top:960px;width:314px;height:8px;background:#707070;border-radius:4px"></div>
<div class="abs" id="sheet" style="left:0;top:181px;width:1371px;height:767px;overflow:hidden;background:#fff">
<div class="abs" style="left:0;top:0;width:1372px;height:26px;background:#f0f0f0"></div>
<div class="abs" style="left:0;top:0;width:27px;height:767px;background:#f0f0f0"></div>
<div class="abs" style="left:27px;top:26px;width:1345px;height:1px;background:#a6a6a6"></div>
<div class="abs" style="left:0;top:26px;width:27px;height:1px;background:#dcdcdc"></div>
<div class="abs" style="left:27px;top:4px;width:1px;height:22px;background:#dcdcdc"></div>
<svg class="abs" style="left:8px;top:7px" width="17" height="17"><path d="M16 1 L16 16 L1 16 Z" fill="#dcdcdc"/></svg>
<div class="gv" style="left:99px;top:27px;height:741px"></div>
<div class="abs" style="left:99px;top:4px;width:1px;height:22px;background:#dcdcdc"></div>
<div class="gv" style="left:197px;top:27px;height:741px"></div>
<div class="abs" style="left:197px;top:4px;width:1px;height:22px;background:#dcdcdc"></div>
<div class="gv" style="left:293px;top:27px;height:741px"></div>
<div class="abs" style="left:293px;top:4px;width:1px;height:22px;background:#dcdcdc"></div>
<div class="gv" style="left:389px;top:27px;height:741px"></div>
<div class="abs" style="left:389px;top:4px;width:1px;height:22px;background:#dcdcdc"></div>
<div class="gv" style="left:505px;top:27px;height:741px"></div>
<div class="abs" style="left:505px;top:4px;width:1px;height:22px;background:#dcdcdc"></div>
<div class="gv" style="left:576px;top:27px;height:741px"></div>
<div class="abs" style="left:576px;top:4px;width:1px;height:22px;background:#dcdcdc"></div>
<div class="gv" style="left:596px;top:27px;height:741px"></div>
<div class="abs" style="left:596px;top:4px;width:1px;height:22px;background:#dcdcdc"></div>
<div class="gv" style="left:617px;top:27px;height:741px"></div>
<div class="abs" style="left:617px;top:4px;width:1px;height:22px;background:#dcdcdc"></div>
<div class="gv" style="left:688px;top:27px;height:741px"></div>
<div class="abs" style="left:688px;top:4px;width:1px;height:22px;background:#dcdcdc"></div>
<div class="gv" style="left:817px;top:27px;height:741px"></div>
<div class="abs" style="left:817px;top:4px;width:1px;height:22px;background:#dcdcdc"></div>
<div class="gv" style="left:837px;top:27px;height:741px"></div>
<div class="abs" style="left:837px;top:4px;width:1px;height:22px;background:#dcdcdc"></div>
<div class="gv" style="left:909px;top:27px;height:741px"></div>
<div class="abs" style="left:909px;top:4px;width:1px;height:22px;background:#dcdcdc"></div>
<div class="gv" style="left:1024px;top:27px;height:741px"></div>
<div class="abs" style="left:1024px;top:4px;width:1px;height:22px;background:#dcdcdc"></div>
<div class="gv" style="left:1096px;top:27px;height:741px"></div>
<div class="abs" style="left:1096px;top:4px;width:1px;height:22px;background:#dcdcdc"></div>
<div class="gv" style="left:1211px;top:27px;height:741px"></div>
<div class="abs" style="left:1211px;top:4px;width:1px;height:22px;background:#dcdcdc"></div>
<div class="gv" style="left:1246px;top:27px;height:741px"></div>
<div class="abs" style="left:1246px;top:4px;width:1px;height:22px;background:#dcdcdc"></div>
<div class="gv" style="left:1317px;top:27px;height:741px"></div>
<div class="abs" style="left:1317px;top:4px;width:1px;height:22px;background:#dcdcdc"></div>
<div class="gv" style="left:1411px;top:27px;height:741px"></div>
<div class="abs" style="left:1411px;top:4px;width:1px;height:22px;background:#dcdcdc"></div>
<div class="gh" style="left:27px;top:57px;width:1345px"></div>
<div class="abs" style="left:0;top:57px;width:26px;height:1px;background:#e0e0e0"></div>
<div class="gh" style="left:27px;top:108px;width:1345px"></div>
<div class="abs" style="left:0;top:108px;width:26px;height:1px;background:#e0e0e0"></div>
<div class="gh" style="left:27px;top:143px;width:1345px"></div>
<div class="abs" style="left:0;top:143px;width:26px;height:1px;background:#e0e0e0"></div>
<div class="gh" style="left:27px;top:178px;width:1345px"></div>
<div class="abs" style="left:0;top:178px;width:26px;height:1px;background:#e0e0e0"></div>
<div class="gh" style="left:27px;top:213px;width:1345px"></div>
<div class="abs" style="left:0;top:213px;width:26px;height:1px;background:#e0e0e0"></div>
<div class="gh" style="left:27px;top:248px;width:1345px"></div>
<div class="abs" style="left:0;top:248px;width:26px;height:1px;background:#e0e0e0"></div>
<div class="gh" style="left:27px;top:283px;width:1345px"></div>
<div class="abs" style="left:0;top:283px;width:26px;height:1px;background:#e0e0e0"></div>
<div class="gh" style="left:27px;top:318px;width:1345px"></div>
<div class="abs" style="left:0;top:318px;width:26px;height:1px;background:#e0e0e0"></div>
<div class="gh" style="left:27px;top:353px;width:1345px"></div>
<div class="abs" style="left:0;top:353px;width:26px;height:1px;background:#e0e0e0"></div>
<div class="gh" style="left:27px;top:388px;width:1345px"></div>
<div class="abs" style="left:0;top:388px;width:26px;height:1px;background:#e0e0e0"></div>
<div class="gh" style="left:27px;top:423px;width:1345px"></div>
<div class="abs" style="left:0;top:423px;width:26px;height:1px;background:#e0e0e0"></div>
<div class="gh" style="left:27px;top:458px;width:1345px"></div>
<div class="abs" style="left:0;top:458px;width:26px;height:1px;background:#e0e0e0"></div>
<div class="gh" style="left:27px;top:493px;width:1345px"></div>
<div class="abs" style="left:0;top:493px;width:26px;height:1px;background:#e0e0e0"></div>
<div class="gh" style="left:27px;top:528px;width:1345px"></div>
<div class="abs" style="left:0;top:528px;width:26px;height:1px;background:#e0e0e0"></div>
<div class="gh" style="left:27px;top:563px;width:1345px"></div>
<div class="abs" style="left:0;top:563px;width:26px;height:1px;background:#e0e0e0"></div>
<div class="gh" style="left:27px;top:598px;width:1345px"></div>
<div class="abs" style="left:0;top:598px;width:26px;height:1px;background:#e0e0e0"></div>
<div class="gh" style="left:27px;top:633px;width:1345px"></div>
<div class="abs" style="left:0;top:633px;width:26px;height:1px;background:#e0e0e0"></div>
<div class="gh" style="left:27px;top:668px;width:1345px"></div>
<div class="abs" style="left:0;top:668px;width:26px;height:1px;background:#e0e0e0"></div>
<div class="gh" style="left:27px;top:703px;width:1345px"></div>
<div class="abs" style="left:0;top:703px;width:26px;height:1px;background:#e0e0e0"></div>
<div class="gh" style="left:27px;top:738px;width:1345px"></div>
<div class="abs" style="left:0;top:738px;width:26px;height:1px;background:#e0e0e0"></div>
<div class="gh" style="left:27px;top:773px;width:1345px"></div>
<div class="abs" style="left:0;top:773px;width:26px;height:1px;background:#e0e0e0"></div>
<div class="colh" style="left:27px;width:72px;top:0">A</div>
<div class="colh" style="left:99px;width:98px;top:0">B</div>
<div class="colh" style="left:197px;width:96px;top:0">C</div>
<div class="colh" style="left:293px;width:96px;top:0">D</div>
<div class="colh" style="left:389px;width:116px;top:0">E</div>
<div class="colh" style="left:505px;width:71px;top:0">F</div>
<div class="colh" style="left:576px;width:20px;top:0">G</div>
<div class="colh" style="left:596px;width:21px;top:0">H</div>
<div class="colh" style="left:617px;width:71px;top:0">I</div>
<div class="colh" style="left:688px;width:129px;top:0">J</div>
<div class="colh" style="left:817px;width:20px;top:0">K</div>
<div class="colh" style="left:837px;width:72px;top:0">L</div>
<div class="colh" style="left:909px;width:115px;top:0">M</div>
<div class="colh" style="left:1024px;width:72px;top:0">N</div>
<div class="colh" style="left:1096px;width:115px;top:0">O</div>
<div class="colh" style="left:1211px;width:35px;top:0">P</div>
<div class="colh" style="left:1246px;width:71px;top:0">S</div>
<div class="colh" style="left:1317px;width:94px;top:0">T</div>
<div class="rowh" style="top:38px">1</div>
<div class="rowh" style="top:89px">2</div>
<div class="rowh" style="top:124px">3</div>
<div class="rowh" style="top:159px">4</div>
<div class="rowh" style="top:194px">5</div>
<div class="rowh" style="top:229px">6</div>
<div class="rowh" style="top:264px">7</div>
<div class="rowh" style="top:299px">8</div>
<div class="rowh" style="top:334px">9</div>
<div class="rowh" style="top:369px">10</div>
<div class="rowh" style="top:404px">11</div>
<div class="rowh" style="top:439px">12</div>
<div class="rowh" style="top:474px">13</div>
<div class="rowh" style="top:509px">14</div>
<div class="rowh" style="top:544px">15</div>
<div class="rowh" style="top:579px">16</div>
<div class="rowh" style="top:614px">17</div>
<div class="rowh" style="top:649px">18</div>
<div class="rowh" style="top:684px">19</div>
<div class="rowh" style="top:719px">20</div>
<div class="rowh" style="top:754px">21</div>
<div class="abs" style="left:28px;top:27px;width:548px;height:30px;background:#fff"></div>
<div class="abs" style="left:576px;top:27px;width:1px;height:30px;background:#b4b4b4"></div>
<div class="abs" style="left:618px;top:27px;width:199px;height:30px;background:#fff"></div>
<div class="abs" style="left:27px;top:57px;width:549px;height:51px;background:#d0d0d0"></div>
<div class="abs" style="left:27px;top:109px;width:549px;height:680px;background:#fff"></div>
<div class="vl" style="left:99px;top:57px;height:720px"></div>
<div class="vl" style="left:197px;top:57px;height:720px"></div>
<div class="vl" style="left:293px;top:57px;height:720px"></div>
<div class="vl" style="left:389px;top:57px;height:720px"></div>
<div class="vl" style="left:505px;top:57px;height:720px"></div>
<div class="abs" style="left:576px;top:27px;width:1px;height:760px;background:#9c9c9c"></div>
<div class="hl" style="left:27px;top:57px;width:549px"></div>
<div class="hl" style="left:27px;top:108px;width:549px"></div>
<div class="hl" style="left:27px;top:143px;width:549px"></div>
<div class="hl" style="left:27px;top:178px;width:549px"></div>
<div class="hl" style="left:27px;top:213px;width:549px"></div>
<div class="hl" style="left:27px;top:248px;width:549px"></div>
<div class="hl" style="left:27px;top:283px;width:549px"></div>
<div class="hl" style="left:27px;top:318px;width:549px"></div>
<div class="hl" style="left:27px;top:353px;width:549px"></div>
<div class="hl" style="left:27px;top:388px;width:549px"></div>
<div class="hl" style="left:27px;top:423px;width:549px"></div>
<div class="hl" style="left:27px;top:458px;width:549px"></div>
<div class="hl" style="left:27px;top:493px;width:549px"></div>
<div class="hl" style="left:27px;top:528px;width:549px"></div>
<div class="hl" style="left:27px;top:563px;width:549px"></div>
<div class="hl" style="left:27px;top:598px;width:549px"></div>
<div class="hl" style="left:27px;top:633px;width:549px"></div>
<div class="hl" style="left:27px;top:668px;width:549px"></div>
<div class="hl" style="left:27px;top:703px;width:549px"></div>
<div class="hl" style="left:27px;top:738px;width:549px"></div>
<div class="hl" style="left:27px;top:773px;width:549px"></div>
<div class="abs" style="left:617px;top:57px;width:200px;height:51px;background:#d0d0d0"></div>
<div class="abs" style="left:617px;top:109px;width:200px;height:680px;background:#fff"></div>
<div class="vl" style="left:617px;top:57px;height:720px"></div>
<div class="vl" style="left:688px;top:57px;height:720px"></div>
<div class="vl" style="left:817px;top:57px;height:720px"></div>
<div class="hl" style="left:617px;top:57px;width:201px"></div>
<div class="hl" style="left:617px;top:108px;width:201px"></div>
<div class="hl" style="left:617px;top:143px;width:201px"></div>
<div class="hl" style="left:617px;top:178px;width:201px"></div>
<div class="hl" style="left:617px;top:213px;width:201px"></div>
<div class="hl" style="left:617px;top:248px;width:201px"></div>
<div class="hl" style="left:617px;top:283px;width:201px"></div>
<div class="hl" style="left:617px;top:318px;width:201px"></div>
<div class="hl" style="left:617px;top:353px;width:201px"></div>
<div class="hl" style="left:617px;top:388px;width:201px"></div>
<div class="hl" style="left:617px;top:423px;width:201px"></div>
<div class="hl" style="left:617px;top:458px;width:201px"></div>
<div class="hl" style="left:617px;top:493px;width:201px"></div>
<div class="hl" style="left:617px;top:528px;width:201px"></div>
<div class="hl" style="left:617px;top:563px;width:201px"></div>
<div class="hl" style="left:617px;top:598px;width:201px"></div>
<div class="hl" style="left:617px;top:633px;width:201px"></div>
<div class="hl" style="left:617px;top:668px;width:201px"></div>
<div class="hl" style="left:617px;top:703px;width:201px"></div>
<div class="hl" style="left:617px;top:738px;width:201px"></div>
<div class="hl" style="left:617px;top:773px;width:201px"></div>
<svg class="abs" style="left:595px;top:27px" width="3" height="741"><path d="M1.5 0 V741" stroke="#000" stroke-width="1.2" stroke-dasharray="9 3 3 3 3 3" fill="none"/></svg>
<div class="abs" style="left:27px;top:26px;width:1px;height:741px;background:#a6a6a6"></div>
<div class="cell" style="left:32px;width:88px;top:27px;height:30px;justify-content:flex-start;font-size:16.5px;color:#333;padding-top:0">希望表</div>
<div class="cell" style="left:114px;width:286px;top:27px;height:30px;justify-content:flex-start;font-size:13px;letter-spacing:.1px;padding-top:1px">※入居者の希望を記入してください。</div>
<div class="cell" style="left:620px;width:100px;top:27px;height:30px;justify-content:flex-start;font-size:16.5px;color:#333;padding-top:0">消防設備表</div>
<div class="cell" style="left:706px;width:114px;top:27px;height:30px;justify-content:flex-start;font-size:13px;padding-top:3px;letter-spacing:0">（消防点検のみ）</div>
<div class="cell" style="left:27px;width:72px;top:57px;height:51px;line-height:25px"><div>部屋番号<br><span style="font-size:13px">（必須）</span></div></div>
<div class="cell" style="left:99px;width:98px;top:57px;height:51px;">氏名</div>
<div class="cell" style="left:197px;width:96px;top:57px;height:51px;">希望日</div>
<div class="cell" style="left:293px;width:96px;top:57px;height:51px;">希望時間</div>
<div class="cell" style="left:389px;width:116px;top:57px;height:51px;line-height:25px"><div>空室<i>/</i>不在<i>/</i>辞退<br>/外部</div></div>
<div class="cell" style="left:505px;width:71px;top:57px;height:51px;line-height:25px"><div>印取表へ<br>書込済</div></div>
<div class="cell" style="left:617px;width:71px;top:57px;height:51px;line-height:25px"><div>部屋番号<br><span style="font-size:13px">（必須）</span></div></div>
<div class="cell" style="left:688px;width:129px;top:57px;height:51px;line-height:25px"><div>避難はしご<br>/ベル</div></div>
<div class="cell" style="left:27px;width:72px;top:108px;height:35px;"><span class="num">1501</span></div>
<div class="cell" style="left:99px;width:98px;top:108px;height:35px;">山田太郎</div>
<div class="cell" style="left:197px;width:96px;top:108px;height:35px;">1日</div>
<div class="cell" style="left:293px;width:96px;top:108px;height:35px;"><span class="num">A9:30</span></div>
<div class="cell" style="left:505px;width:71px;top:108px;height:35px;"><span style="font-family:'Noto Sans CJK JP',sans-serif;font-weight:400;position:relative;top:-1.5px;left:1px;font-size:14px;color:#000">○</span></div>
<div class="cell" style="left:27px;width:72px;top:143px;height:35px;"><span class="num">1503</span></div>
<div class="cell" style="left:99px;width:98px;top:143px;height:35px;">佐藤太郎</div>
<div class="cell" style="left:389px;width:116px;top:143px;height:35px;">辞退</div>
<div class="cell" style="left:505px;width:71px;top:143px;height:35px;"><span style="font-family:'Noto Sans CJK JP',sans-serif;font-weight:400;position:relative;top:-1.5px;left:1px;font-size:14px;color:#000">○</span></div>
<div class="cell" style="left:27px;width:72px;top:178px;height:35px;"><span class="num">1505</span></div>
<div class="cell" style="left:99px;width:98px;top:178px;height:35px;">鈴木太郎</div>
<div class="cell" style="left:389px;width:116px;top:178px;height:35px;">外部</div>
<div class="cell" style="left:505px;width:71px;top:178px;height:35px;"><span style="font-family:'Noto Sans CJK JP',sans-serif;font-weight:400;position:relative;top:-1.5px;left:1px;font-size:14px;color:#000">○</span></div>
<div class="cell" style="left:617px;width:71px;top:108px;height:35px;"><span class="num">1502</span></div>
<div class="cell" style="left:688px;width:129px;top:108px;height:35px;font-size:13px">ベル</div>
<div class="cell" style="left:617px;width:71px;top:143px;height:35px;"><span class="num">1504</span></div>
<div class="cell" style="left:688px;width:129px;top:143px;height:35px;font-size:13px">避難はしご</div>
<div class="abs" style="left:818px;top:265px;width:17px;height:17px;background:linear-gradient(#fff,#eef1f5);border:1px solid #a9b1bd"></div>
<svg class="abs" style="left:823px;top:272px" width="8" height="5"><path d="M0 0 H7.4 L3.7 4.2 Z" fill="#606060"/></svg>
<div class="abs" style="left:837px;top:57px;width:375px;height:296px;background:#fff"></div>
<div class="abs" style="left:837px;top:57px;width:73px;height:296px;background:#b5e6a2"></div>
<div class="abs" style="left:1024px;top:178px;width:73px;height:35px;background:#b5e6a2"></div>
<div class="abs" style="left:837px;top:353px;width:375px;height:440px;background:#f2f2f2"></div>
<div class="abs" style="left:837px;top:57px;width:1px;height:742px;background:#1b5a72"></div>
<div class="abs" style="left:1211px;top:57px;width:1px;height:742px;background:#1b5a72"></div>
<div class="abs" style="left:909px;top:57px;width:1px;height:296px;background:#1b5a72"></div>
<div class="abs" style="left:1024px;top:178px;width:1px;height:35px;background:#1b5a72"></div>
<div class="abs" style="left:1096px;top:178px;width:1px;height:35px;background:#1b5a72"></div>
<div class="gv" style="left:1024px;top:144px;height:34px"></div>
<div class="gv" style="left:1096px;top:144px;height:34px"></div>
<div class="abs" style="left:837px;top:57px;width:375px;height:1px;background:#1b5a72"></div>
<div class="abs" style="left:837px;top:108px;width:375px;height:1px;background:#1b5a72"></div>
<div class="abs" style="left:837px;top:143px;width:375px;height:1px;background:#1b5a72"></div>
<div class="abs" style="left:837px;top:178px;width:375px;height:1px;background:#1b5a72"></div>
<div class="abs" style="left:837px;top:213px;width:375px;height:1px;background:#1b5a72"></div>
<div class="abs" style="left:837px;top:353px;width:375px;height:1px;background:#1b5a72"></div>
<div class="cell" style="left:837px;width:72px;top:57px;height:51px;padding:0 4px 0 2px;font-size:14px;font-weight:400"><span style="display:block;width:100%;text-align:justify;text-align-last:justify">物件名</span></div>
<div class="cell" style="left:837px;width:72px;top:108px;height:35px;padding:0 4px 0 2px;font-size:14px;font-weight:400"><span style="display:block;width:100%;text-align:justify;text-align-last:justify">棟名</span></div>
<div class="cell" style="left:837px;width:72px;top:143px;height:35px;padding:0 4px 0 2px;font-size:14px;font-weight:400"><span style="display:block;width:100%;text-align:justify;text-align-last:justify">実施日</span></div>
<div class="cell" style="left:837px;width:72px;top:178px;height:35px;padding:0 4px 0 2px;font-size:14px;font-weight:400"><span style="display:block;width:100%;text-align:justify;text-align-last:justify">作業種別</span></div>
<div class="cell" style="left:837px;width:72px;top:213px;height:140px;padding:0 4px 0 2px;font-size:14px;font-weight:400"><span style="display:block;width:100%;text-align:justify;text-align-last:justify">備考</span></div>
<div class="cell" style="left:1024px;width:72px;top:178px;height:35px;padding:0 4px 0 2px;font-size:14px;font-weight:400"><span style="display:block;width:100%;text-align:justify;text-align-last:justify">管理番号</span></div>
<div class="cell" style="left:925px;width:275px;top:57px;height:51px;justify-content:flex-start;font-size:14px;letter-spacing:1.1px;padding-bottom:3px">マンションテスト</div>
<div class="cell" style="left:925px;width:275px;top:108px;height:35px;justify-content:flex-start">A</div>
<div class="cell" style="left:909px;width:115px;top:143px;height:35px;"><span class="num">R7.7.1</span></div>
<div class="cell" style="left:1024px;width:72px;top:143px;height:35px;">～</div>
<div class="cell" style="left:1096px;width:115px;top:143px;height:35px;"><span class="num">R7.7.3</span></div>
<div class="cell" style="left:909px;width:115px;top:178px;height:35px;">消防</div>
<div class="cell" style="left:1096px;width:115px;top:178px;height:35px;"><span class="num">1</span></div>
<div class="abs ins" style="left:840.5px;top:367px">【 使用方法 】</div>
<div class="abs ins" style="left:840px;top:389px"><span style="color:#c00000;font-weight:500">(1)</span> 印取表に入居者から届いた実施希望内容等を記入するは、</div>
<div class="abs ins" style="left:853.5px;top:411px">まず入居者から届いた実施希望内容等を左表に記入してくだ</div>
<div class="abs ins" style="left:853.5px;top:433px">さい。</div>
<div class="abs ins" style="left:853.5px;top:455px">記入後「<b>希望書込</b>」ボタンを押してください。印取表（左側</div>
<div class="abs ins" style="left:853.5px;top:477px">シートで管理番号が同じもの）に記入したデータが書き込ま</div>
<div class="abs ins" style="left:853.5px;top:499px">れます。印取枠と実施数欄にすでに書き込まれているデータ</div>
<div class="abs ins" style="left:853.5px;top:521px">は全て消去され、この希望表のデータが書き込まれます。</div>
<div class="abs ins" style="left:841px;top:545px"><span style="margin-right:2px">・</span> 書き込む印取表の部屋番号を変更した場合は、希望表の</div>
<div class="abs ins" style="left:853.5px;top:567px">部屋番号欄にも印取表と同じ部屋番号を入力してください。</div>
<div class="abs ins" style="left:841px;top:591px"><span style="margin-right:2px">・</span> 一日のみの作業では希望日の入力は要りませんが、複数日</div>
<div class="abs ins" style="left:853.5px;top:613px">にわたる場合は<b>必ず</b>希望日を入力してください。</div>
<div class="abs ins" style="left:841px;top:635px">・ 入居者の希望内容に間違いがないかよく確認して入力して</div>
<div class="abs ins" style="left:853.5px;top:657px">ください。</div>
<div class="abs ins" style="left:841px;top:681px"><span style="margin-right:2px">・</span> 空室、不在、辞退を入力した場合は、希望日、希望日時の</div>
<div class="abs ins" style="left:853.5px;top:703px">入力はしないでください。また希望日、希望日時を入力した</div>
<div class="abs ins" style="left:853.5px;top:725px">場合は空室、不在、辞退を入力しないでください。（空室、</div>
<div class="abs ins" style="left:853.5px;top:747px">不在、辞退に希望日時の指定はできないため印取表に書き</div>
<div class="abs" style="left:1227px;top:57px;width:122px;height:32px;background:#fff;border:1px solid #ababab"></div>
<svg class="abs" style="left:1327px;top:66px" width="12" height="12"><path d="M1 1 L11 11 M11 1 L1 11" stroke="#8a8a8a" stroke-width="1" fill="none"/></svg>
<div class="abs" style="left:1227px;top:87px;width:122px;height:185px;background:#808080;border:1px solid #111;border-right:2px solid #222;border-bottom:2px solid #222"></div>
<span class="ui" style="left:1247px;top:101.5px;font-size:13.5px;line-height:19px;color:#fff;font-weight:700;transform:scaleX(1.0247);">印取表へ書込</span>
<div class="abs" style="left:1252px;width:74px;top:121px;height:32px;background:#000"></div>
<div class="abs" style="left:1253px;width:72px;top:122px;height:30px;background:#c0c0c0;box-shadow:inset 1px 1px 0 #f4f4f4,inset -1px -1px 0 #4a4a4a,inset -2px -2px 0 #8c8c8c"></div>
<span class="ui" style="left:1260px;top:126.5px;font-size:14px;line-height:20px;color:#000;font-weight:700;transform:scaleX(1.0179);">希望書込</span>
<div class="abs" style="left:1253px;width:72px;top:161px;height:31px;background:#c0c0c0;box-shadow:inset 1px 1px 0 #f4f4f4,inset -1px -1px 0 #4a4a4a,inset -2px -2px 0 #8c8c8c"></div>
<span class="ui" style="left:1260px;top:166.0px;font-size:14px;line-height:20px;color:#000;font-weight:700;transform:scaleX(1.0179);">設備書込</span>
<span class="ui" style="left:1244px;top:206.0px;font-size:13.5px;line-height:19px;color:#fff;font-weight:700;transform:scaleX(0.9312);">管理シート表示</span>
<div class="abs" style="left:1253px;width:72px;top:225px;height:31px;background:#c0c0c0;box-shadow:inset 1px 1px 0 #f4f4f4,inset -1px -1px 0 #4a4a4a,inset -2px -2px 0 #8c8c8c"></div>
<span class="ui" style="left:1259px;top:230.0px;font-size:14px;line-height:20px;color:#000;font-weight:700;transform:scaleX(0.8571);">管理シート</span>
</div>
<div class="abs" style="left:1372px;top:181px;width:15px;height:767px;background:#f0f0f0;overflow:hidden"><div class="abs" style="left:2px;top:3px;width:30px;height:764px;background:#f8f8f8;border-radius:9px"></div></div>
<svg class="abs" style="left:1378px;top:188px" width="9" height="8"><path d="M4.5 .5 L9.500 7.500 H-.5 Z" fill="#707070"/></svg>
<svg class="abs" style="left:1378px;top:938px" width="9" height="8"><path d="M-.5 .5 H9.500 L4.500 7.500 Z" fill="#707070"/></svg>
<div class="abs" style="left:1378px;top:201px;width:9px;height:271px;background:#707070;border-radius:4.5px 0 0 4.5px / 4.5px 0 0 4.5px"></div>
</body></html>
